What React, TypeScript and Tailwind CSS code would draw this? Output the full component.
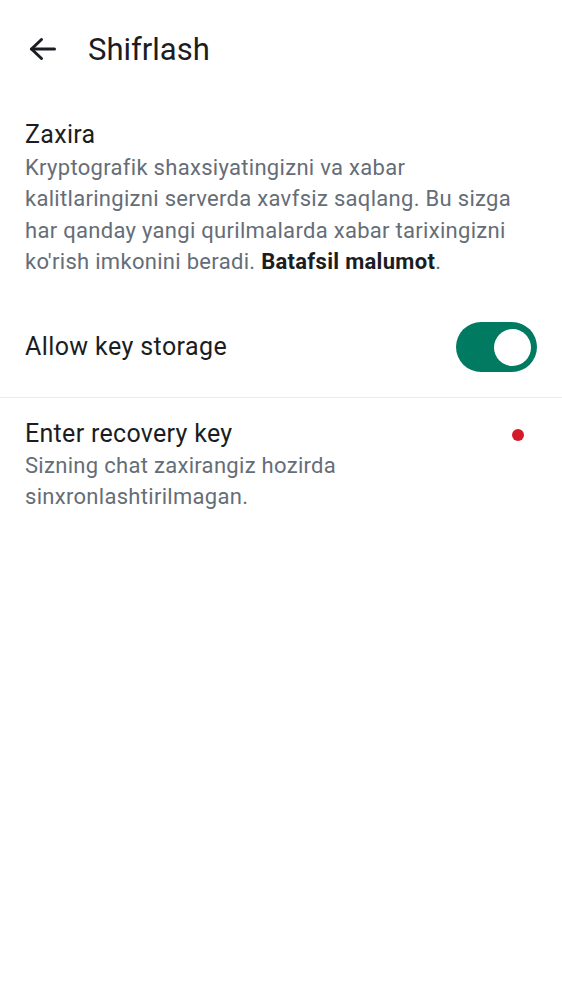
export default function App() {
  return (
    <div className="min-h-screen w-full bg-white font-['Roboto',sans-serif] text-[#1b1d22]">
      {/* Top bar */}
      <div className="flex h-[98px] items-center pl-[29px]">
        <svg width="28" height="24" viewBox="0 0 28 24" fill="none" stroke="#1b1d22" strokeWidth="3" strokeLinecap="round" strokeLinejoin="round">
          <path d="M2.5 12H25.5" />
          <path d="M12.5 2.5L2.5 12L12.5 21.5" />
        </svg>
        <h1 className="ml-[31px] text-[31px] leading-none">Shifrlash</h1>
      </div>

      {/* Backup description */}
      <div className="px-[25px] pt-[20px]">
        <div className="text-[25px] leading-[34px] tracking-[0.3px]">Zaxira</div>
        <p className="text-[22px] leading-[31.25px] tracking-[0.3px] text-[#656d77]">
          Kryptografik shaxsiyatingizni va xabar
          <br />
          kalitlaringizni serverda xavfsiz saqlang. Bu sizga
          <br />
          har qanday yangi qurilmalarda xabar tarixingizni
          <br />
          ko'rish imkonini beradi. <span className="font-bold text-[#1b1d22]">Batafsil malumot</span>.
        </p>
      </div>

      {/* Toggle row */}
      <div className="mt-[45px] flex items-center justify-between px-[25px] pb-[25px]">
        <span className="text-[25px] leading-[34px] tracking-[0.4px]">Allow key storage</span>
        <div className="flex h-[50px] w-[81px] items-center justify-end rounded-full bg-[#007a61] pr-[6px]">
          <div className="h-[37px] w-[37px] rounded-full bg-white" />
        </div>
      </div>

      <div className="h-px bg-[#e9ebee]" />

      {/* Recovery key row */}
      <div className="flex items-start justify-between px-[25px] pt-[20px]">
        <div>
          <div className="text-[25px] leading-[32px] tracking-[0.3px]">Enter recovery key</div>
          <p className="text-[22px] leading-[31.25px] tracking-[0.3px] text-[#656d77]">
            Sizning chat zaxirangiz hozirda
            <br />
            sinxronlashtirilmagan.
          </p>
        </div>
        <div className="mr-[13px] mt-[11px] h-[12px] w-[12px] rounded-full bg-[#d51928]" />
      </div>
    </div>
  );
}
